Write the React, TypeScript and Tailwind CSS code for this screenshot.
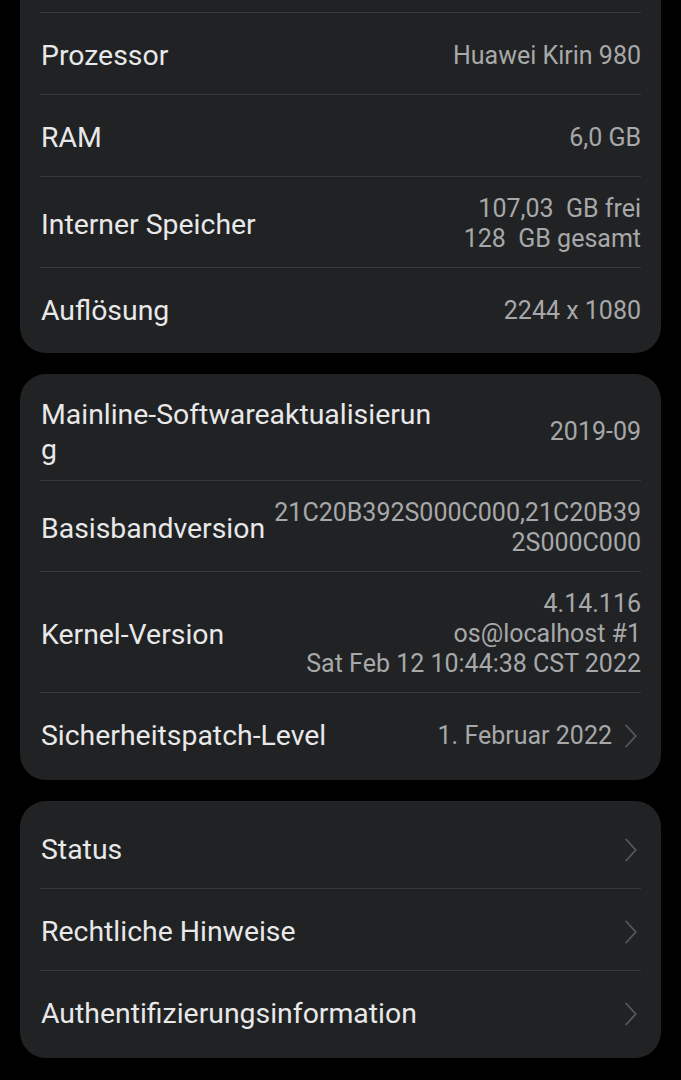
import React from 'react';

type Row = {
  title: React.ReactNode;
  value?: React.ReactNode;
  chevron?: boolean;
};

const hardware: Row[] = [
  { title: 'Prozessor', value: 'Huawei Kirin 980' },
  { title: 'RAM', value: '6,0 GB' },
  {
    title: 'Interner Speicher',
    value: (
      <>
        107,03&nbsp; GB frei
        <br />
        128&nbsp; GB gesamt
      </>
    ),
  },
  { title: 'Auflösung', value: '2244 x 1080' },
];

const software: Row[] = [
  {
    title: (
      <>
        Mainline-Softwareaktualisierun
        <br />g
      </>
    ),
    value: '2019-09',
  },
  {
    title: 'Basisbandversion',
    value: (
      <>
        21C20B392S000C000,21C20B39
        <br />
        2S000C000
      </>
    ),
  },
  {
    title: 'Kernel-Version',
    value: (
      <>
        4.14.116
        <br />
        os@localhost #1
        <br />
        Sat Feb 12 10:44:38 CST 2022
      </>
    ),
  },
  { title: 'Sicherheitspatch-Level', value: '1. Februar 2022', chevron: true },
];

const more: Row[] = [
  { title: 'Status', chevron: true },
  { title: 'Rechtliche Hinweise', chevron: true },
  { title: 'Authentifizierungsinformation', chevron: true },
];

function Chevron() {
  return (
    <svg width="12" height="24" viewBox="0 0 12 24" className="ml-[13px] mr-1 shrink-0">
      <path d="M1.2 1.5 L10.8 12 L1.2 22.5" fill="none" stroke="#58595b" strokeWidth="1.8" strokeLinecap="round" strokeLinejoin="round" />
    </svg>
  );
}

function InfoRow({ row, first }: { row: Row; first: boolean }) {
  return (
    <div className={first ? '' : 'border-t border-[#37383a]'}>
      <div className="flex min-h-[81px] items-center justify-between pt-[17px] pb-[13px]">
        <div className="whitespace-nowrap pl-px text-[28.4px] leading-[35px] text-[#e8e8e9]">{row.title}</div>
        <div className="flex items-center">
          {row.value && (
            <div className="whitespace-nowrap text-right text-[25px] leading-[30px] text-[#a7a8a9]">{row.value}</div>
          )}
          {row.chevron && <Chevron />}
        </div>
      </div>
    </div>
  );
}

function Card({ rows, cut }: { rows: Row[]; cut?: boolean }) {
  return (
    <div
      className={
        cut
          ? 'rounded-b-[26px] bg-[#212224] px-5 pb-1'
          : 'rounded-[26px] bg-[#212224] px-5 py-[6px]'
      }
    >
      {cut && <div className="h-3" />}
      {rows.map((row, i) => (
        <InfoRow key={i} row={row} first={i === 0 && !cut} />
      ))}
    </div>
  );
}

export default function App() {
  return (
    <div
      className="min-h-[1080px] bg-black px-5"
      style={{ fontFamily: 'Roboto, "Noto Sans", sans-serif' }}
    >
      <div className="flex flex-col gap-[21px]">
        <Card rows={hardware} cut />
        <Card rows={software} />
        <Card rows={more} />
      </div>
    </div>
  );
}
